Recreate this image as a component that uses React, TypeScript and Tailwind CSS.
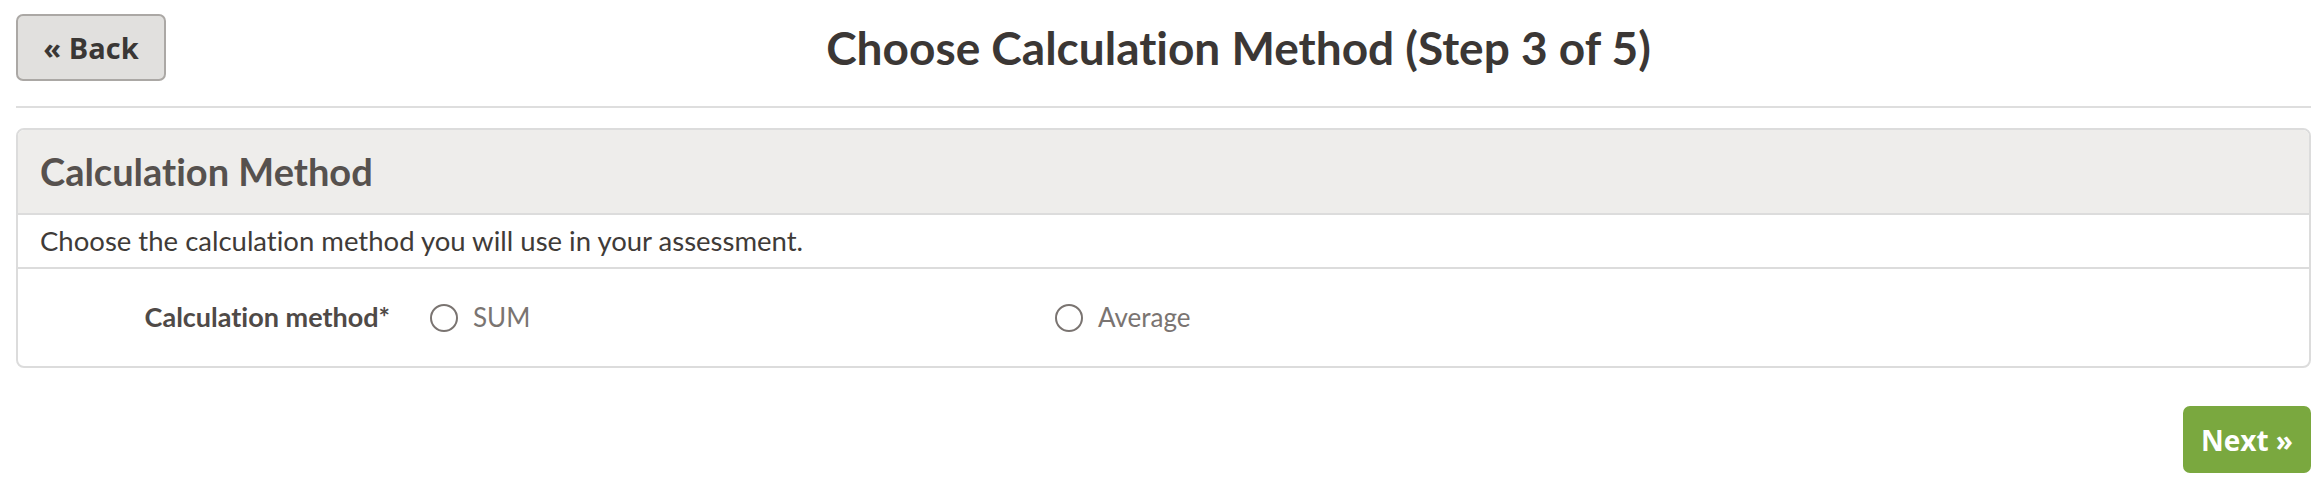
import { useState } from "react";

const options = [
  { value: "sum", label: "SUM" },
  { value: "average", label: "Average" },
];

export default function App() {
  const [method, setMethod] = useState("");

  return (
    <div className="w-full bg-white pt-[14px] pl-[16px] pr-[13px] font-['Lato',sans-serif] text-[#3d3936] [font-variant-ligatures:none]">
      <div className="flex items-center">
        <button className="h-[67px] w-[150px] shrink-0 rounded-[7px] border-2 border-[#aba8a5] bg-[#e1e0de] font-['Open_Sans',sans-serif] text-[29px] font-bold text-[#3a3735]">
          « Back
        </button>
        <h1 className="flex-1 text-center text-[46px] font-bold leading-none text-[#3b3735]">
          Choose Calculation Method (Step 3 of 5)
        </h1>
      </div>

      <hr className="mt-[25px] border-t-2 border-[#dedede]" />

      <div className="mt-[20px] overflow-hidden rounded-[8px] border-2 border-[#dcdcdc]">
        <div className="flex h-[85px] items-center border-b-2 border-[#dcdcdc] bg-[#eeedeb] px-[22px]">
          <h2 className="text-[38px] font-bold text-[#56514e]">Calculation Method</h2>
        </div>
        <div className="flex h-[54px] items-center border-b-2 border-[#dcdcdc] px-[22px]">
          <p className="text-[27.5px] text-[#3f3b38]">Choose the calculation method you will use in your assessment.</p>
        </div>
        <div className="flex h-[97px] items-center">
          <div className="w-[372px] shrink-0 text-right text-[27px] font-bold text-[#4f4a47]">Calculation method*</div>
          <div className="flex">
            {options.map((o) => (
              <label key={o.value} className="flex w-[625px] cursor-pointer items-center pl-[40px]">
                <input
                  type="radio"
                  name="method"
                  value={o.value}
                  checked={method === o.value}
                  onChange={() => setMethod(o.value)}
                  className="peer sr-only"
                />
                <span className="flex h-[28px] w-[28px] items-center justify-center rounded-full border-2 border-[#7a7471] peer-checked:after:block after:hidden after:h-[14px] after:w-[14px] after:rounded-full after:bg-[#7a7471]" />
                <span className="ml-[15px] text-[26px] text-[#7a7471]">{o.label}</span>
              </label>
            ))}
          </div>
        </div>
      </div>

      <div className="mt-[38px] flex justify-end">
        <button className="h-[67px] w-[128px] rounded-[7px] bg-[#7aa83f] font-['Open_Sans',sans-serif] text-[28px] font-bold text-white">
          Next »
        </button>
      </div>
    </div>
  );
}
